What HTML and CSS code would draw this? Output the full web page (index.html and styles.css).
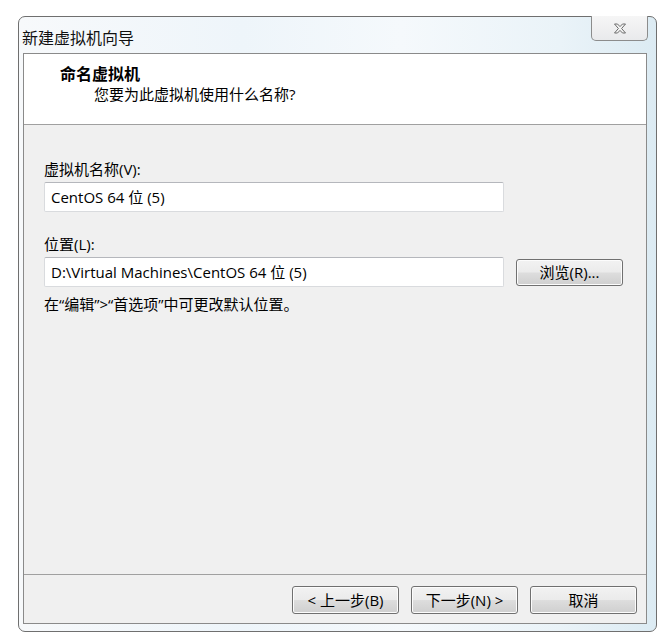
FILE: index.html
```html
<!DOCTYPE html>
<html lang="zh-CN">
<head>
<meta charset="utf-8">
<title>新建虚拟机向导</title>
<link rel="stylesheet" href="styles.css">
</head>
<body>
<div class="window">
  <div class="titlebar">
    <span class="title">新建虚拟机向导</span>
    <button class="close" aria-label="关闭">
      <svg width="14" height="11" viewBox="0 0 14 11"><path d="M1.5 1 L4.5 1 L7 3.6 L9.5 1 L12.5 1 L8.6 5.5 L12.5 10 L9.5 10 L7 7.4 L4.5 10 L1.5 10 L5.4 5.5 Z" fill="#f4f4f4" stroke="#6b6b6b" stroke-width="1" stroke-linejoin="round"/></svg>
    </button>
  </div>
  <div class="client">
    <div class="header">
      <div class="h-title">命名虚拟机</div>
      <div class="h-sub">您要为此虚拟机使用什么名称?</div>
    </div>
    <div class="body">
      <div class="label l-name">虚拟机名称(V):</div>
      <div class="row">
        <div class="input">CentOS 64 位 (5)</div>
      </div>
      <div class="label l-loc">位置(L):</div>
      <div class="row">
        <div class="input">D:\Virtual Machines\CentOS 64 位 (5)</div>
        <button class="btn browse">浏览(R)...</button>
      </div>
      <div class="hint">在“编辑”&gt;“首选项”中可更改默认位置。</div>
    </div>
    <div class="footer">
      <button class="btn">&lt; 上一步(B)</button>
      <button class="btn">下一步(N) &gt;</button>
      <button class="btn cancel">取消</button>
    </div>
  </div>
</div>
</body>
</html>
```

FILE: styles.css
```css
html, body {
  margin: 0;
  padding: 0;
  background: #ffffff;
}
body {
  font-family: "Open Sans", "Noto Sans CJK SC", sans-serif;
  font-size: 15px;
  color: #000;
}
.window {
  margin: 16px 0 0 18px;
  width: 639px;
  height: 616px;
  box-sizing: border-box;
  border: 1px solid #6f6f6f;
  border-radius: 7px;
  background: linear-gradient(90deg, #f7f9fb 0%, #eef5fa 35%, #f5f9fc 60%, #eaf3f8 85%, #dcebf3 100%);
  display: flex;
  flex-direction: column;
  padding: 0 9px 7px 4px;
}
.titlebar {
  height: 36px;
  display: flex;
  justify-content: space-between;
  align-items: flex-start;
}
.title {
  margin-top: 10px;
  margin-left: -1px;
  font-family: "Noto Sans CJK SC", sans-serif;
  font-size: 16px;
  line-height: 20px;
  color: #111;
}
.close {
  margin: -1px -1px 0 0;
  width: 57px;
  height: 25px;
  border: 1px solid #8c8c8c;
  border-top: none;
  border-radius: 0 0 5px 5px;
  background: linear-gradient(#f6f6f6, #e9eaec);
  display: flex;
  align-items: center;
  justify-content: center;
  padding: 0;
}
.client {
  flex: 1;
  border: 1px solid #8a8a8a;
  background: #f0f0f0;
  display: flex;
  flex-direction: column;
}
.header {
  height: 71px;
  background: #ffffff;
  border-bottom: 1px solid #a0a0a0;
  box-sizing: border-box;
  padding: 9px 0 0 36px;
}
.h-title {
  font-family: "Noto Sans CJK SC", sans-serif;
  font-weight: bold;
  font-size: 16px;
  line-height: 21px;
}
.h-sub {
  margin-left: 34px;
  font-size: 15px;
  line-height: 20px;
}
.body {
  flex: 1;
  padding: 0 0 0 20px;
}
.label {
  font-size: 15px;
  line-height: 20px;
}
.l-name { margin-top: 34px; }
.l-loc { margin-top: 22px; }
.row {
  display: flex;
  align-items: center;
  gap: 12px;
  margin-top: 3px;
}
.input {
  width: 460px;
  height: 30px;
  box-sizing: border-box;
  background: #fff;
  border: 1px solid #d9dbde;
  border-top-color: #b5b7bc;
  border-radius: 2px;
  padding: 0 0 0 6px;
  font-size: 15px;
  line-height: 28px;
  color: #000;
}
.btn {
  width: 107px;
  height: 27px;
  box-sizing: border-box;
  border: 1px solid #707070;
  border-radius: 3px;
  background: linear-gradient(#f2f2f2 0%, #ebebeb 48%, #dddddd 52%, #cfcfcf 100%);
  font-family: "Open Sans", "Noto Sans CJK SC", sans-serif;
  font-size: 15px;
  line-height: 20px;
  color: #000;
  padding: 0;
  box-shadow: inset 0 0 0 1px #fcfcfc;
}
.hint {
  margin-top: 7px;
  font-size: 15px;
  line-height: 20px;
}
.footer {
  height: 49px;
  border-top: 1px solid #a0a0a0;
  box-sizing: border-box;
  display: flex;
  justify-content: flex-end;
  align-items: flex-start;
  gap: 12px;
  padding: 11px 9px 0 0;
}
.footer .btn {
  height: 28px;
}
```
